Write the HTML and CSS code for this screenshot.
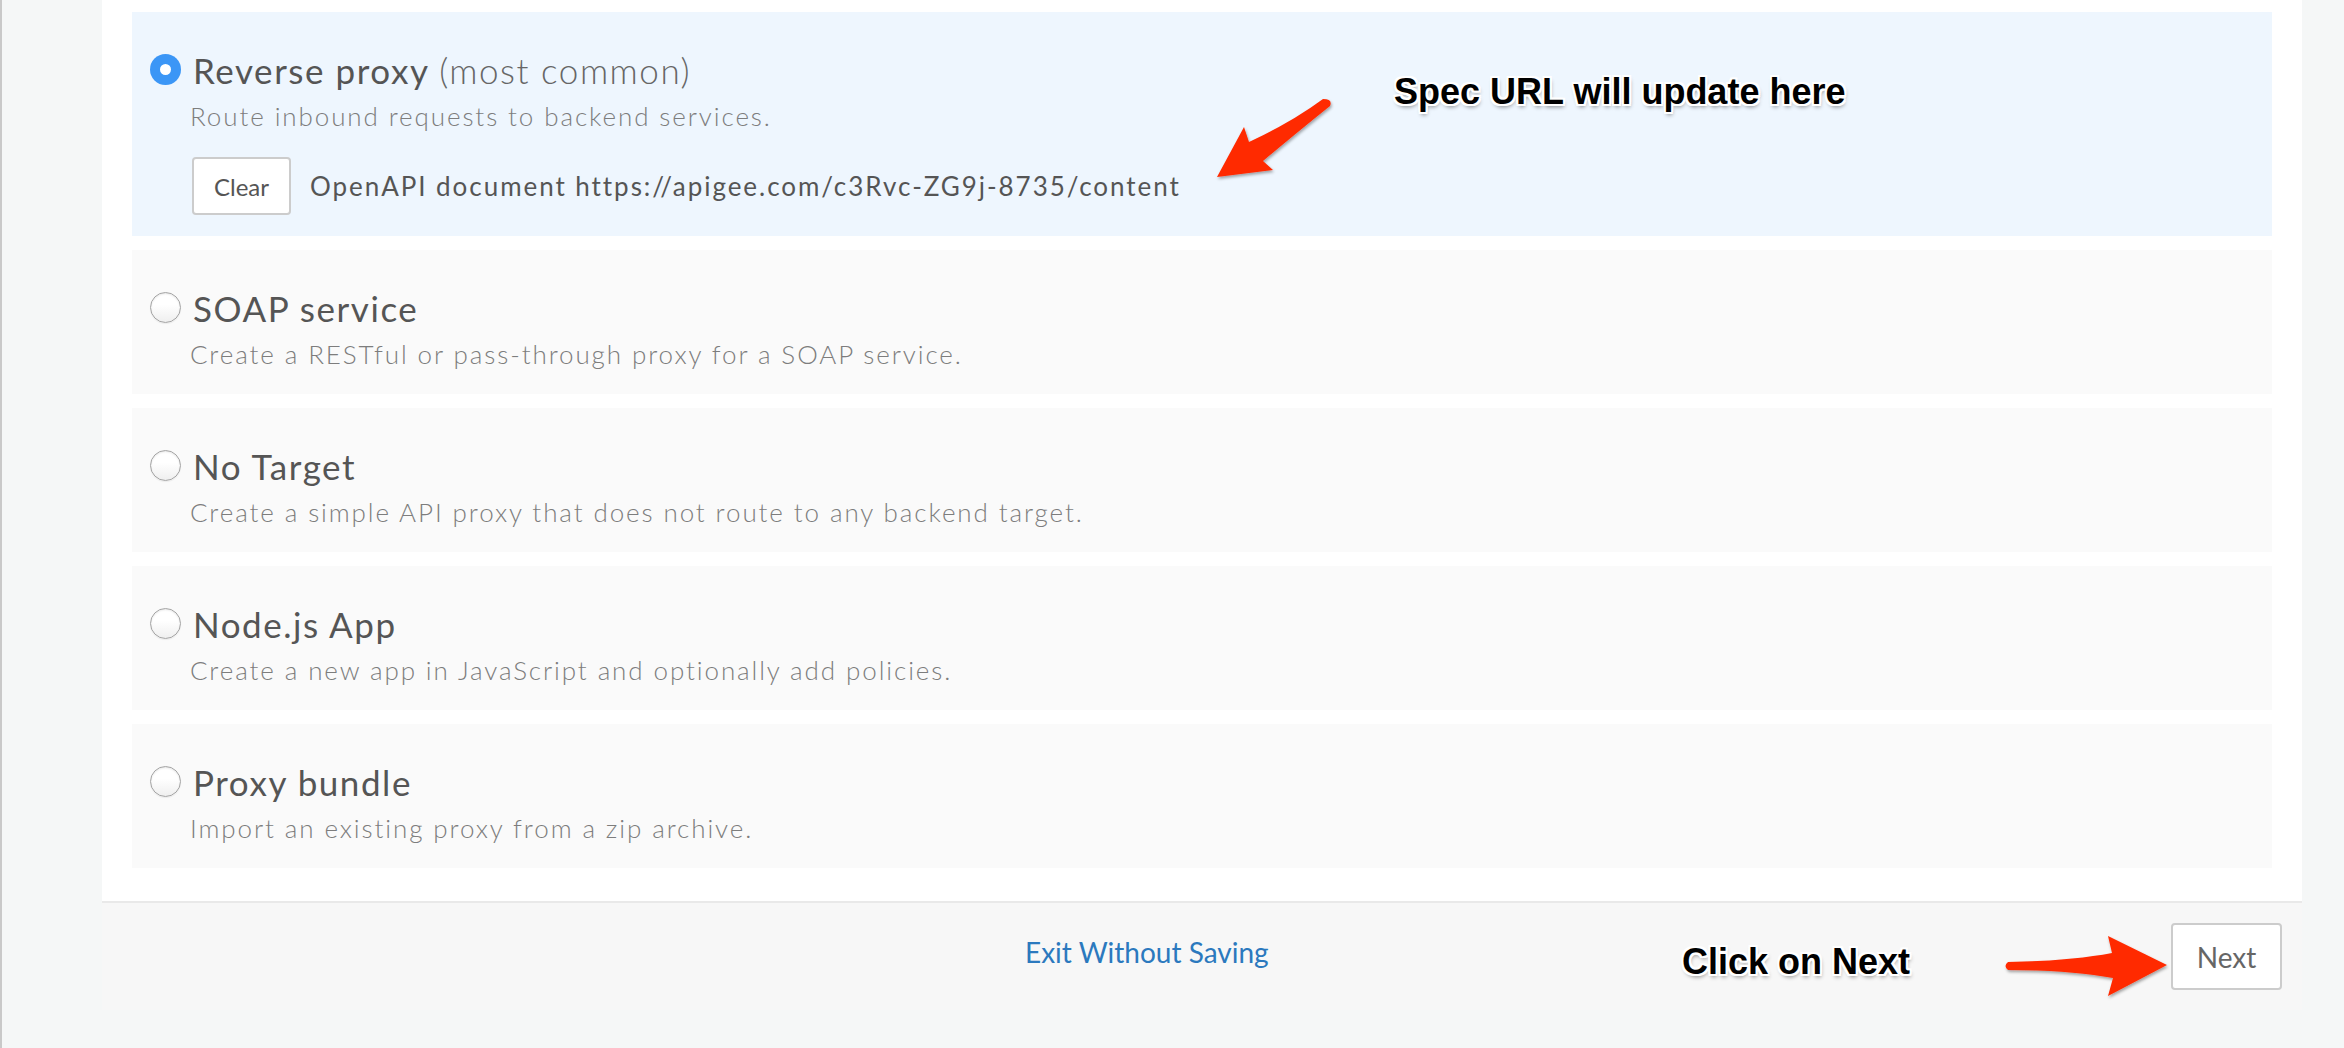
FILE: index.html
```html
<!DOCTYPE html>
<html lang="en">
<head>
<meta charset="utf-8">
<title>Build a Proxy</title>
<link rel="stylesheet" href="styles.css">
</head>
<body>
<div class="page">
  <main class="panel">
    <div class="options">
      <div class="option selected">
        <div class="option-head">
          <span class="radio checked"></span>
          <span class="title">Reverse proxy <span class="hint">(most common)</span></span>
        </div>
        <div class="desc">Route inbound requests to backend services.</div>
        <div class="spec-row">
          <button class="btn clear">Clear</button>
          <span class="spec-text">OpenAPI document https://apigee.com/c3Rvc-ZG9j-8735/content</span>
        </div>
      </div>
      <div class="option">
        <div class="option-head">
          <span class="radio"></span>
          <span class="title">SOAP service</span>
        </div>
        <div class="desc">Create a RESTful or pass-through proxy for a SOAP service.</div>
      </div>
      <div class="option">
        <div class="option-head">
          <span class="radio"></span>
          <span class="title">No Target</span>
        </div>
        <div class="desc">Create a simple API proxy that does not route to any backend target.</div>
      </div>
      <div class="option">
        <div class="option-head">
          <span class="radio"></span>
          <span class="title">Node.js App</span>
        </div>
        <div class="desc">Create a new app in JavaScript and optionally add policies.</div>
      </div>
      <div class="option">
        <div class="option-head">
          <span class="radio"></span>
          <span class="title">Proxy bundle</span>
        </div>
        <div class="desc">Import an existing proxy from a zip archive.</div>
      </div>
    </div>
  </main>
  <footer class="footer">
    <a class="exit" href="#">Exit Without Saving</a>
    <button class="btn next">Next</button>
  </footer>
</div>

<div class="annot annot-spec">Spec URL will update here</div>
<div class="annot annot-next">Click on Next</div>

<svg class="arrows" width="2344" height="1048" viewBox="0 0 2344 1048" xmlns="http://www.w3.org/2000/svg">
  <defs>
    <filter id="sh" x="-20%" y="-20%" width="140%" height="140%">
      <feDropShadow dx="1" dy="2" stdDeviation="1.5" flood-color="#000" flood-opacity="0.35"/>
    </filter>
  </defs>
  <path filter="url(#sh)" fill="#ff2a00" d="M1323 99 Q1292 122 1249 142 L1244 127 L1217 177 L1273 170 L1263 161 Q1300 130 1330 106 Q1333 99 1323 99 Z"/>
  <path filter="url(#sh)" fill="#ff2a00" d="M2008 962 Q2070 961 2112 953 L2108 936 L2167 965 L2108 996 L2113 978 Q2070 970 2008 970 Q2003 966 2008 962 Z"/>
</svg>
</body>
</html>
```

FILE: styles.css
```css
html, body {
  margin: 0;
  padding: 0;
}

body {
  background: #f5f7f7;
  font-family: Lato, "Open Sans", sans-serif;
  width: 2344px;
  height: 1048px;
  overflow: hidden;
  position: relative;
}

.page {
  height: 1048px;
  border-left: 2px solid #c9c9c9;
  box-sizing: border-box;
  padding-left: 100px;
  padding-right: 42px;
}

.panel {
  background: #ffffff;
  padding: 12px 30px 33px 30px;
}

.options {
  display: flex;
  flex-direction: column;
  gap: 14px;
}

.option {
  background: #fafafa;
  height: 144px;
  box-sizing: border-box;
  padding: 37px 18px 0 18px;
}

.option.selected {
  background: #eef6fe;
  height: 224px;
}

.option-head {
  display: flex;
  align-items: center;
  gap: 12px;
  height: 41px;
}

.radio {
  width: 31px;
  height: 31px;
  border-radius: 50%;
  box-sizing: border-box;
  border: 1px solid #a4a4a4;
  background: linear-gradient(#ffffff 40%, #efefef);
  box-shadow: inset 0 1px 2px rgba(0,0,0,0.10), 0 1px 1px rgba(0,0,0,0.06);
  flex: none;
  position: relative;
}

.radio.checked {
  border: none;
  background: #3b96f6;
  box-shadow: none;
}

.radio.checked::after {
  content: "";
  position: absolute;
  left: 10px;
  top: 10px;
  width: 11px;
  height: 11px;
  border-radius: 50%;
  background: #ffffff;
}

.title {
  font-size: 35px;
  color: #555555;
  font-weight: 400;
  letter-spacing: 1.55px;
  white-space: nowrap;
}

.hint {
  font-weight: 300;
  color: #666666;
}

.desc {
  margin: 10px 0 0 40px;
  font-size: 26px;
  font-weight: 300;
  color: #7d7d7d;
  letter-spacing: 1.9px;
  white-space: nowrap;
}

.spec-row {
  display: flex;
  align-items: center;
  gap: 19px;
  margin: 25px 0 0 42px;
}

.btn {
  font-family: Lato, "Open Sans", sans-serif;
  background: #ffffff;
  border: 2px solid #cccccc;
  border-radius: 4px;
  color: #555555;
  padding: 0;
  box-sizing: border-box;
}

.clear {
  width: 99px;
  height: 58px;
  font-size: 24px;
}

.spec-text {
  font-size: 26px;
  color: #555555;
  letter-spacing: 1.95px;
  white-space: nowrap;
}

.footer {
  height: 109px;
  box-sizing: border-box;
  border-top: 2px solid #e9e9e9;
  background: #f7f7f7;
  display: flex;
  align-items: center;
  padding: 0 20px 0 923px;
}

.exit {
  font-size: 28px;
  color: #2b79be;
  text-decoration: none;
  margin-bottom: 10px;
}

.next {
  margin-left: auto;
  width: 111px;
  height: 67px;
  font-size: 28px;
  color: #666666;
}

.annot {
  position: absolute;
  font-family: "Liberation Sans", Arial, sans-serif;
  font-weight: 700;
  font-size: 36px;
  color: #000000;
  line-height: 1;
  white-space: nowrap;
  text-shadow:
    -2px -2px 0 #fff, 2px -2px 0 #fff, -2px 2px 0 #fff, 2px 2px 0 #fff,
    0 -2px 0 #fff, 0 2px 0 #fff, -2px 0 0 #fff, 2px 0 0 #fff,
    1px 3px 4px rgba(0,0,0,0.45);
}

.annot-spec {
  left: 1394px;
  top: 74px;
}

.annot-next {
  left: 1682px;
  top: 944px;
}

.arrows {
  position: absolute;
  left: 0;
  top: 0;
  pointer-events: none;
}
```
